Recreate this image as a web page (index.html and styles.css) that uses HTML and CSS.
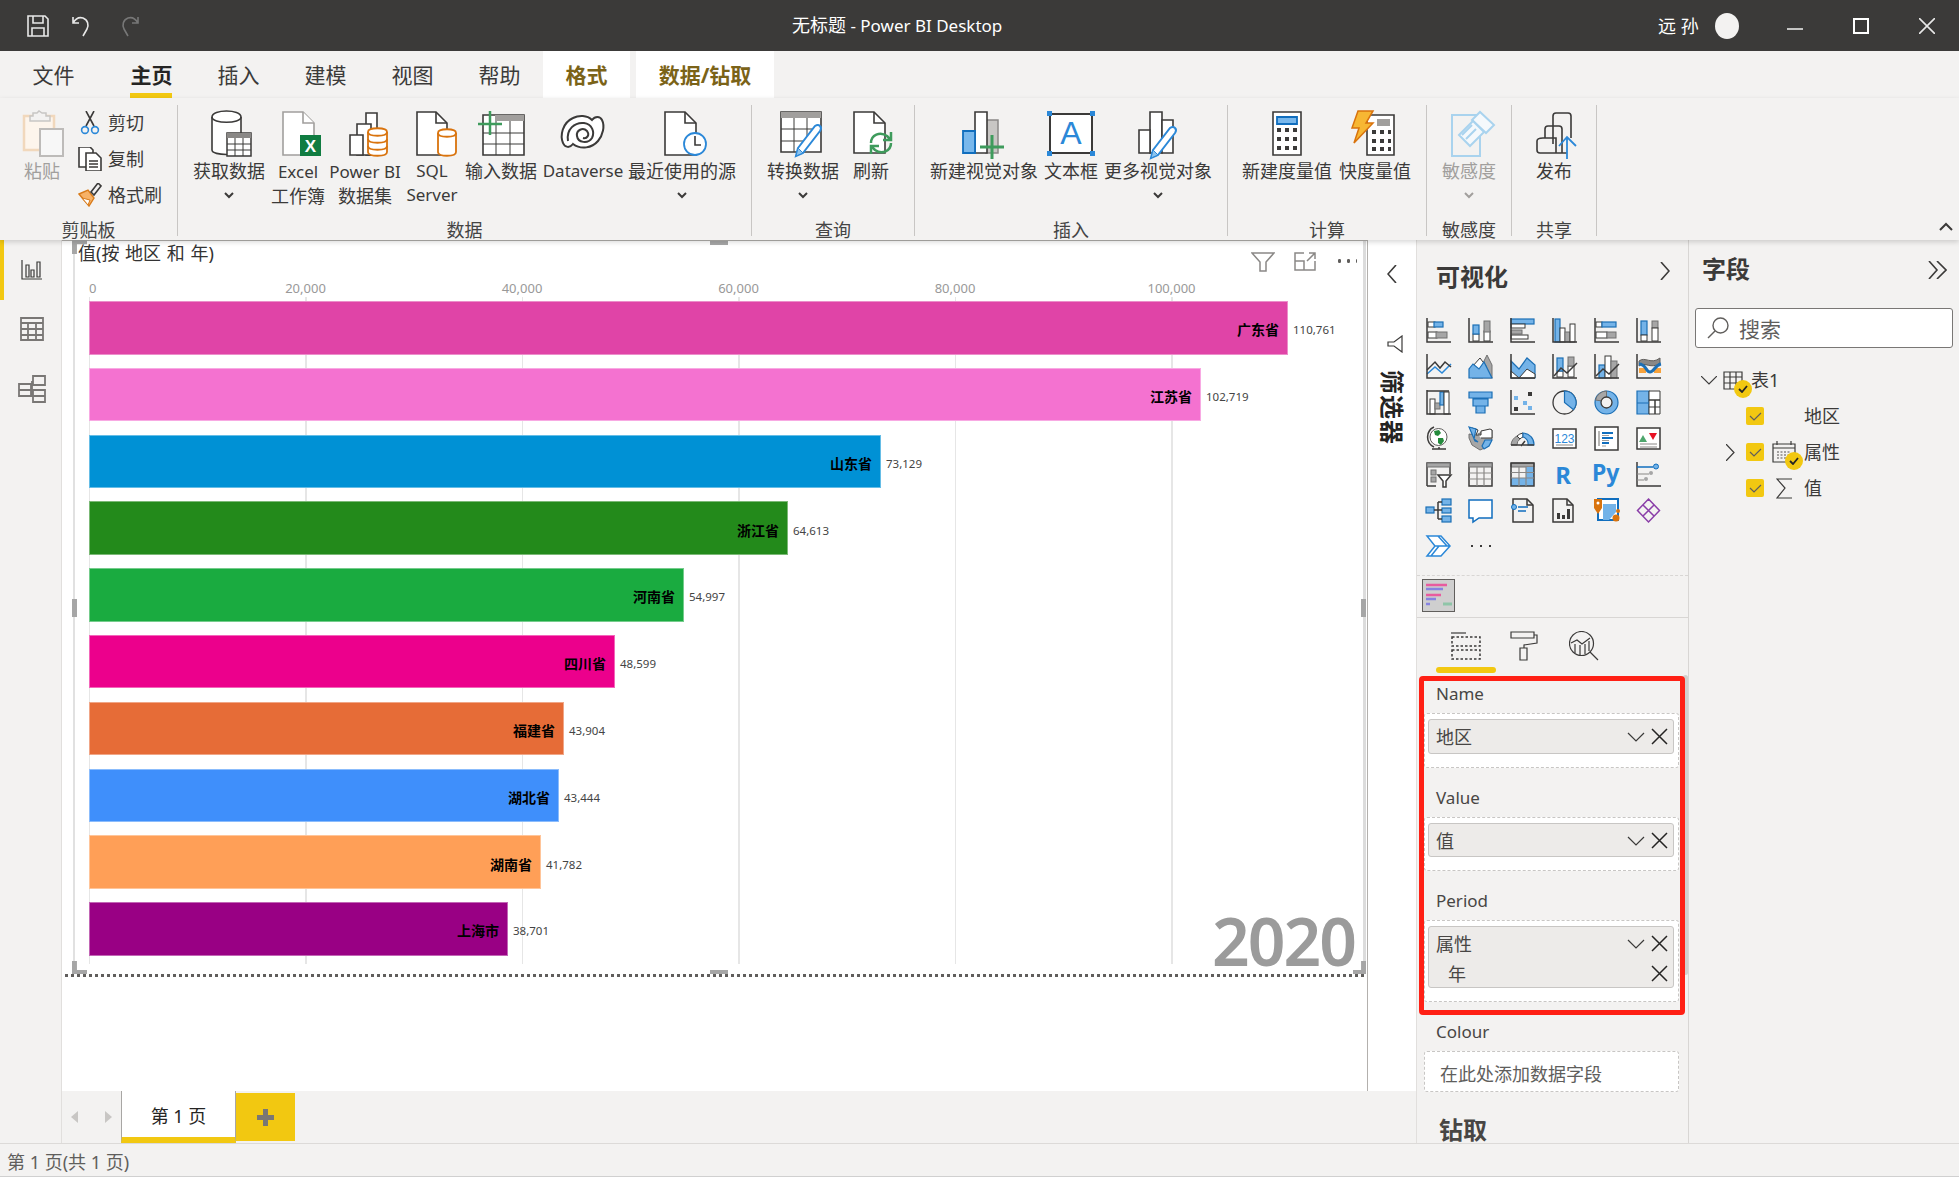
FILE: index.html
```html
<!DOCTYPE html>
<html lang="zh">
<head>
<meta charset="utf-8">
<title>无标题 - Power BI Desktop</title>
<link rel="stylesheet" href="styles.css">
</head>
<body>
<div class="app">
  <header class="titlebar">
    <div class="qat">
      <svg class="qi" viewBox="0 0 22 22"><path class="w" d="M1 1h17l3 3v17H1zM6 1v7h10V1M5 21v-8h12v8"/></svg>
      <svg class="qi" viewBox="0 0 22 22"><path class="w" d="M1 2v6h6M1 8c3-5 7-6 10-5 5 2 6 7 4 11l-4 7"/></svg>
      <svg class="qi" viewBox="0 0 22 22"><path class="dim" d="M21 2v6h-6M21 8c-3-5-7-6-10-5-5 2-6 7-4 11l4 7"/></svg>
    </div>
    <div class="doc-title"><span class="zh">无标题</span> - Power BI Desktop</div>
    <div class="win">
      <span class="user">远 孙</span>
      <span class="avatar"></span>
      <svg class="wb min" viewBox="0 0 16 16"><path class="w" d="M0 10h16"/></svg>
      <svg class="wb max" viewBox="0 0 16 16"><path class="w2" d="M1 1h14v14H1z"/></svg>
      <svg class="wb cls" viewBox="0 0 16 16"><path class="w" d="M0 0l16 16M16 0L0 16"/></svg>
    </div>
  </header>

  <nav class="tabs">
    <span class="tab t-file">文件</span>
    <span class="tab active">主页</span>
    <span class="tab">插入</span>
    <span class="tab">建模</span>
    <span class="tab">视图</span>
    <span class="tab">帮助</span>
    <span class="ctx ctx-a">格式</span>
    <span class="ctx ctx-b">数据/钻取</span>
  </nav>

  <section class="ribbon">
    <div class="grp g-clip">
      <div class="items">
        <div class="item disabled">
          <svg class="ico" viewBox="-1 0 48 45"><path class="pf" d="M5 5h30v34H5z"/><path class="pc" d="M14 5V2h4l2-2 3 2h4v3h4v5H11V5z"/><path class="pp" d="M21 18h23v27H21z"/></svg>
          <span class="lb">粘贴</span>
        </div>
        <div class="small-col">
          <div class="small"><svg class="sico" viewBox="0 0 24 24"><path class="k" d="M8 0l8 15M16 0L8 15"/><circle class="bl" cx="7" cy="19" r="3.4"/><circle class="bl" cx="17" cy="19" r="3.4"/></svg><span>剪切</span></div>
          <div class="small"><svg class="sico" viewBox="0 0 24 24"><path class="kw" d="M1 0h11l3 3v17H1z"/><path class="kw" d="M8 6h10l5 5v13H8z"/><path class="k" d="M11 14h9M11 17h9M11 20h9"/></svg><span>复制</span></div>
          <div class="small"><svg class="sico" viewBox="0 0 24 24"><path class="o" d="M1 11l9-4 6 8-5 8z"/><path class="o2" d="M4 15l6 7 2-5z"/><path class="k" d="M13 9l7-9 3 3-7 9z"/></svg><span>格式刷</span></div>
        </div>
      </div>
      <div class="gl">剪贴板</div>
    </div>

    <div class="grp g-data">
      <div class="items">
        <div class="item"><svg class="ico" viewBox="-3 0 48 45"><path class="kw" d="M4 6c0-8 29-8 29 0v33c0 6-29 6-29 0z"/><path class="k" d="M4 6c0 7 29 7 29 0"/><use href="#calc" x="18" y="21"/></svg><span class="lb">获取数据</span><svg class="chev" viewBox="0 0 10 7"><path class="k2" d="M1 1l4 4 4-4"/></svg></div>
        <div class="item"><svg class="ico" viewBox="-4 0 48 45"><path class="dg" d="M5 1h20l11 11v32H5z"/><path class="dg" d="M25 1v11h11"/><rect class="xl" x="22" y="24" width="21" height="21"/><text class="xt" x="32.5" y="41">X</text></svg><span class="lb"><span class="en">Excel</span><br>工作簿</span></div>
        <div class="item"><svg class="ico" viewBox="-5 0 48 45"><path class="kw" d="M20 2h11v42H20z"/><path class="kw" d="M11 13h14v31H11z"/><path class="kw" d="M4 24h13v20H4z"/><g class="od"><path d="M22 21c0-5 19-5 19 0v20c0 5-19 5-19 0z"/><path d="M22 21c0 5 19 5 19 0M22 28c0 5 19 5 19 0M22 35c0 5 19 5 19 0"/></g></svg><span class="lb"><span class="en">Power BI</span><br>数据集</span></div>
        <div class="item"><svg class="ico" viewBox="-4 0 48 45"><path class="kw" d="M5 1h19l11 11v32H5z"/><path class="k" d="M24 1v11h11"/><g class="od"><path d="M26 22c0-5 18-5 18 0v19c0 5-18 5-18 0z"/><path d="M26 22c0 5 18 5 18 0"/></g></svg><span class="lb en">SQL<br>Server</span></div>
        <div class="item"><svg class="ico" viewBox="-1 0 48 45"><path class="kw" d="M5 4h41v40H5z"/><path class="ghd" d="M17 4h29v6H17z"/><path class="k1" d="M5 22h41M5 33h41M18 10v34M32 10v34"/><path class="gr" d="M0 13h24M12 0v24"/></svg><span class="lb">输入数据</span></div>
        <div class="item"><svg class="ico" viewBox="0 0 48 45"><path class="kw2" d="M14 7C20 4 28 4 33 9 36 5 41 5 43 9 46 15 44 24 39 30 33 37 22 39 14 33 11 37 6 37 4 32 1 25 3 12 14 7z"/><path class="k3" d="M9 30C7 18 16 11 25 12 33 13 36 21 33 27 29 33 19 32 18 25 17 19 24 16 28 20 31 24 28 28 24 27"/></svg><span class="lb en">Dataverse</span></div>
        <div class="item"><svg class="ico" viewBox="-2 0 48 45"><path class="kw" d="M5 1h20l11 11v32H5z"/><path class="k" d="M25 1v11h11"/><circle class="clk" cx="35" cy="33" r="11"/><path class="k" d="M35 25v9h6"/></svg><span class="lb">最近使用的源</span><svg class="chev" viewBox="0 0 10 7"><path class="k2" d="M1 1l4 4 4-4"/></svg></div>
      </div>
      <div class="gl">数据</div>
    </div>

    <div class="grp g-query">
      <div class="items">
        <div class="item"><svg class="ico" viewBox="0 0 48 45"><path class="kw" d="M2 1h40v40H2z"/><path class="ghd" d="M2 1h40v6H2z"/><path class="k1" d="M2 18h40M2 30h30M15 7v34M28 7v20"/><use href="#pencil" x="16" y="13"/></svg><span class="lb">转换数据</span><svg class="chev" viewBox="0 0 10 7"><path class="k2" d="M1 1l4 4 4-4"/></svg></div>
        <div class="item"><svg class="ico" viewBox="-3 0 48 45"><path class="kw" d="M4 1h20l11 11v30H4z"/><path class="k" d="M24 1v11h11"/><path class="gr2" d="M21 32c0-8 9-12 16-7l3 3M41 32c0 8-9 12-16 7l-3-3"/><path class="gr2" d="M41 21v8h-8M21 43v-8h8"/></svg><span class="lb">刷新</span></div>
      </div>
      <div class="gl">查询</div>
    </div>

    <div class="grp g-insert">
      <div class="items">
        <div class="item"><svg class="ico" viewBox="0 0 48 45"><path class="gb" d="M26 9h12v33H26z"/><path class="kw" d="M15 1h12v41H15z"/><path class="bb" d="M3 20h12v22H3z"/><path class="gr3" d="M20 36h24M32 24v24"/></svg><span class="lb">新建视觉对象</span></div>
        <div class="item"><svg class="ico" viewBox="0 0 48 45"><path class="kw2" d="M3 3h42v39H3z"/><g class="hd"><rect x="0" y="0" width="5" height="5"/><rect x="43" y="0" width="5" height="5"/><rect x="0" y="40" width="5" height="5"/><rect x="43" y="40" width="5" height="5"/></g><text class="at" x="24" y="33">A</text></svg><span class="lb">文本框</span></div>
        <div class="item"><svg class="ico" viewBox="-2 0 48 45"><path class="kw" d="M14 1h12v41H14z"/><path class="kw" d="M3 19h11v23H3zM26 9h11v33H26z"/><use href="#pencil" x="14" y="15"/></svg><span class="lb">更多视觉对象</span><svg class="chev" viewBox="0 0 10 7"><path class="k2" d="M1 1l4 4 4-4"/></svg></div>
      </div>
      <div class="gl">插入</div>
    </div>

    <div class="grp g-calc">
      <div class="items">
        <div class="item"><svg class="ico" viewBox="0 0 48 45"><path class="kw" d="M10 1h28v43H10z"/><path class="bb" d="M14 6h20v7H14z"/><g class="kd"><path d="M14 17h4v4h-4zM22 17h4v4h-4zM30 17h4v4h-4zM14 26h4v4h-4zM22 26h4v4h-4zM30 26h4v4h-4zM14 35h4v4h-4zM22 35h4v4h-4zM30 35h4v4h-4z"/></g></svg><span class="lb">新建度量值</span></div>
        <div class="item"><svg class="ico" viewBox="1 0 48 45"><path class="kw" d="M17 4h27v40H17z"/><path class="ghd" d="M27 8h13v7H27z"/><g class="kd"><path d="M22 19h4v4h-4zM30 19h4v4h-4zM38 19h3v4h-3zM22 28h4v4h-4zM30 28h4v4h-4zM38 28h3v4h-3zM22 36h4v4h-4zM30 36h4v4h-4zM38 36h3v4h-3z"/></g><path class="bolt" d="M8 0h15l-7 12h7L4 32l5-15H2z"/></svg><span class="lb">快度量值</span></div>
      </div>
      <div class="gl">计算</div>
    </div>

    <div class="grp g-sens">
      <div class="items">
        <div class="item disabled"><svg class="ico" viewBox="-3 0 48 45"><path class="lbl" d="M4 4h28v41H4z"/><path class="lbl2" d="M24 9l8-8 14 13-8 8z"/><path class="lbl2" d="M11 24l14-14 11 11-14 14z"/><path class="lbl" d="M14 24l10-10M18 28l10-10"/></svg><span class="lb">敏感度</span><svg class="chev" viewBox="0 0 10 7"><path class="k2g" d="M1 1l4 4 4-4"/></svg></div>
      </div>
      <div class="gl">敏感度</div>
    </div>

    <div class="grp g-share">
      <div class="items">
        <div class="item"><svg class="ico" viewBox="-6 0 48 45"><path class="k" d="M17 33V5q0-3 3-3h12q3 0 3 3v22M9 27v-9q0-3 3-3h11q3 0 3 3v24M7 27h13v15H4q-3 0-3-3V30q0-3 6-3zM4 42h27"/><path class="up" d="M31 48V26M23 35l8-9 9 9"/></svg><span class="lb">发布</span></div>
      </div>
      <div class="gl">共享</div>
    </div>
    <svg class="collapse" viewBox="0 0 14 9"><path class="k2" d="M1 8l6-6 6 6"/></svg>
  </section>

  <main class="main">
    <aside class="leftnav">
      <span class="nav-ind"></span>
      <svg class="nico n1" viewBox="0 0 22 22"><path class="k1n" d="M1 1v19h20M5 6h3v12H5zM10 11h3v7h-3zM16 3h3v15h-3z"/></svg>
      <svg class="nico n2" viewBox="0 0 24 24"><path class="gn" d="M1 1h22v22H1zM1 6h22M1 12h22M1 18h22M8 6v17M16 6v17"/></svg>
      <svg class="nico n3" viewBox="0 0 28 28"><path class="gn" d="M15 1h12v9H15zM1 9h12v12H1zM1 15h12M15 15h12v12H15zM15 21h12M15 10h-1M14 6v16"/></svg>
    </aside>

    <div class="center">
      <div class="canvas-row">
        <div class="report">
          <div class="visual">
            <span class="vtitle">值(按 地区 和 年)</span>
            <div class="axis">
              <span>0</span><span>20,000</span><span>40,000</span><span>60,000</span><span>80,000</span><span>100,000</span>
            </div>
            <div class="plot">
              <div class="row"><div class="bar c1" style="width:1199px">广东省</div><span class="val">110,761</span></div>
              <div class="row"><div class="bar c2" style="width:1112px">江苏省</div><span class="val">102,719</span></div>
              <div class="row"><div class="bar c3" style="width:792px">山东省</div><span class="val">73,129</span></div>
              <div class="row"><div class="bar c4" style="width:699px">浙江省</div><span class="val">64,613</span></div>
              <div class="row"><div class="bar c5" style="width:595px">河南省</div><span class="val">54,997</span></div>
              <div class="row"><div class="bar c6" style="width:526px">四川省</div><span class="val">48,599</span></div>
              <div class="row"><div class="bar c7" style="width:475px">福建省</div><span class="val">43,904</span></div>
              <div class="row"><div class="bar c8" style="width:470px">湖北省</div><span class="val">43,444</span></div>
              <div class="row"><div class="bar c9" style="width:452px">湖南省</div><span class="val">41,782</span></div>
              <div class="row"><div class="bar c10" style="width:419px">上海市</div><span class="val">38,701</span></div>
            </div>
            <span class="year">2020</span>
            <div class="vhead">
              <svg class="vh-f" viewBox="0 0 24 20"><path class="gv" d="M1 1h22l-8 9v9H9v-9z"/></svg>
              <svg class="vh-e" viewBox="0 0 22 19"><path class="gv" d="M10 1H1v17h20V9M1 9h9v9M13 9l8-8M15 1h6v6"/></svg>
              <span class="vh-d"></span>
            </div>
            <span class="hnd h-tl"></span><span class="hnd h-bl"></span><span class="hnd h-br"></span>
            <span class="hnd h-t"></span><span class="hnd h-b"></span><span class="hnd h-l"></span><span class="hnd h-r"></span>
          </div>
          <div class="dots"></div>
        </div>
        <aside class="filters">
          <svg class="f-chev" viewBox="0 0 10 18"><path class="k" d="M9 0L1 9l8 9"/></svg>
          <svg class="f-ico" viewBox="0 0 16 18"><path class="k1n" d="M15 1v16L7 11H1V7h6z"/></svg>
          <span class="f-text">筛选器</span>
        </aside>
      </div>
      <div class="pagetabs">
        <div class="pg-nav"><span class="tri-l"></span><span class="tri-r"></span></div>
        <div class="pg-tab">第 1 页</div>
        <div class="pg-add"><span></span></div>
      </div>
    </div>

    <aside class="viz">
      <div class="pane-head"><span class="pane-title">可视化</span><svg class="pane-chev" viewBox="0 0 10 18"><path class="k" d="M1 0l8 9-8 9"/></svg></div>
      <div class="viz-grid">
        <svg viewBox="0 0 25 25"><rect class="wf" x="2" y="4" width="7" height="5"/><rect class="bf" x="8" y="4" width="9" height="5"/><rect class="wf" x="2" y="14" width="9" height="6"/><rect class="gf" x="10" y="14" width="11" height="6"/><path class="s" d="M1 0v24h24"/></svg>
        <svg viewBox="0 0 25 25"><rect class="wf" x="5" y="16" width="6" height="7"/><rect class="bf" x="5" y="7" width="6" height="9"/><rect class="wf" x="16" y="13" width="6" height="10"/><rect class="gf" x="16" y="3" width="6" height="11"/><path class="s" d="M1 0v24h24"/></svg>
        <svg viewBox="0 0 25 25"><rect class="bf" x="1" y="1" width="23" height="5"/><rect class="wf" x="1" y="6" width="14" height="4"/><rect class="gf" x="1" y="12" width="11" height="4"/><rect class="wf" x="1" y="17" width="17" height="4"/><path class="s" d="M1 0v24h24"/></svg>
        <svg viewBox="0 0 25 25"><rect class="bf" x="3" y="1" width="5" height="23"/><rect class="wf" x="8" y="10" width="5" height="14"/><rect class="gf" x="13" y="14" width="5" height="10"/><rect class="wf" x="18" y="6" width="5" height="18"/><path class="s" d="M1 0v24h24"/></svg>
        <svg viewBox="0 0 25 25"><rect class="wf" x="2" y="4" width="6" height="5"/><rect class="bf" x="8" y="4" width="14" height="5"/><rect class="wf" x="2" y="14" width="11" height="6"/><rect class="gf" x="13" y="14" width="9" height="6"/><path class="s" d="M1 0v24h24"/></svg>
        <svg viewBox="0 0 25 25"><rect class="bf" x="5" y="3" width="6" height="14"/><rect class="wf" x="5" y="17" width="6" height="6"/><rect class="gf" x="16" y="3" width="6" height="7"/><rect class="wf" x="16" y="10" width="6" height="13"/><path class="s" d="M1 0v24h24"/></svg>

        <svg viewBox="0 0 25 25"><path class="l2" d="M1 20l8-7 7 6 9-9"/><path class="s" d="M1 16l8-8 5 6 5-6 6 5"/><path class="s" d="M1 0v24h24"/></svg>
        <svg viewBox="0 0 25 25"><path class="gf" d="M15 9l4-8 5 10v13h-9z"/><path class="wf" d="M4 13l8-9 6 8-3 12H4z"/><path class="bf" d="M1 24V15l4-5 6 5 5-7 8 16z"/></svg>
        <svg viewBox="0 0 25 25"><path class="bf" d="M1 7l8 8 8-11 8 7v13H1z"/><path class="wf" d="M1 17l8 7h-8zM9 24l8-9 8 5v4z"/><path class="s" d="M1 0v24h24"/></svg>
        <svg viewBox="0 0 25 25"><rect class="wf" x="5" y="17" width="6" height="6"/><rect class="bf" x="5" y="4" width="6" height="13"/><rect class="wf" x="16" y="12" width="6" height="11"/><rect class="gf" x="16" y="3" width="6" height="9"/><path class="s" d="M2 22l7-8 6 5 10-10"/><path class="s" d="M1 0v24h24"/></svg>
        <svg viewBox="0 0 25 25"><rect class="bf" x="5" y="11" width="6" height="13"/><rect class="wf" x="11" y="2" width="6" height="22"/><rect class="gf" x="17" y="7" width="6" height="17"/><path class="s" d="M2 22l7-7 6 5 10-10"/><path class="s" d="M1 0v24h24"/></svg>
        <svg viewBox="0 0 25 25"><path class="rb-g" d="M3 7c6-5 12 4 21-3v5c-9 7-15-2-21 3z"/><path class="rb-o" d="M3 14h7v5H3zM18 14h7v5h-7z"/><path class="rb-b" d="M3 10c7 0 7 8 11 8s5-7 11-8"/><path class="s" d="M1 0v24h24"/></svg>

        <svg viewBox="0 0 25 25"><rect class="wf" x="4" y="9" width="5" height="15"/><rect class="gf" x="9" y="13" width="5" height="6"/><rect class="bf" x="14" y="2" width="4" height="13"/><rect class="wf" x="18" y="2" width="5" height="22"/><path class="s" d="M1 1h22M1 0v24h24"/></svg>
        <svg viewBox="0 0 25 25"><path class="bf" d="M1 2h23v6H1zM5 9h15v7H5zM8 16h9v7H8z"/></svg>
        <svg viewBox="0 0 25 25"><rect class="lb1" x="4" y="6" width="4" height="4"/><rect class="lb1" x="13" y="11" width="4" height="4"/><rect class="lb1" x="18" y="16" width="4" height="4"/><rect class="db1" x="18" y="2" width="4" height="4"/><rect class="db1" x="4" y="17" width="4" height="4"/><path class="s" d="M1 0v24h24"/></svg>
        <svg viewBox="0 0 25 25"><circle class="wp" cx="12.5" cy="12.5" r="11.5"/><path class="bf" d="M12.5 1a11.5 11.5 0 0 1 9 18.700L12.500 12.500z"/></svg>
        <svg viewBox="0 0 25 25"><circle class="bf" cx="12.500" cy="12.500" r="11.500"/><path class="gf" d="M12.500 1a11.500 11.500 0 0 0-11 9l6.500 1a5 5 0 0 1 4.500-4z"/><circle class="wp" cx="12.500" cy="12.500" r="5.500"/></svg>
        <svg viewBox="0 0 25 25"><path class="bf" d="M1 1h12v23H1z"/><path class="wf" d="M13 1h11v9H13zM13 10h6v14h-6zM19 10h5v14h-5zM13 17h11"/><path class="s1b" d="M1 13h12"/></svg>

        <svg viewBox="0 0 25 25"><circle class="globe" cx="12.500" cy="11" r="8.500"/><path class="land" d="M8 5l5-1 2 3-3 3-3-1zM12 12l5 0 1 3-3 4-3-2z"/><path class="s" d="M8 1a11 11 0 0 0 0 20M6 23h14M13 21v2"/></svg>
        <svg viewBox="0 0 25 25"><path class="gf" d="M1 8l7 1 6-3 10-2v9l-5 8-7 3-8-5-3-7z"/><path class="wf" d="M4 2l6 2-2 5h5v-4l9-2 2 1v8L13 12"/><path class="bf" d="M1 1l7 2-2 10 4 3-3-1zM14 20l3-6h7l-3 6-5 3z"/></svg>
        <svg viewBox="0 0 25 25"><path class="gf" d="M1 19a11.500 11.500 0 0 1 6-9l3 3a7 7 0 0 0-3 6z"/><path class="wf" d="M7 10a11.500 11.500 0 0 1 6-3v4a7 7 0 0 0-3 2z"/><path class="bf" d="M13 7a11.500 11.500 0 0 1 11 12h-6a7 7 0 0 0-5-8z"/><path class="s" d="M1 19h23M11 20l4-5"/></svg>
        <svg viewBox="0 0 25 25"><rect class="wf2" x="1" y="3" width="23" height="19"/><text class="t123" x="12.500" y="17">123</text><path class="l1" d="M4 19h17"/></svg>
        <svg viewBox="0 0 25 25"><rect class="wf2" x="1" y="1" width="23" height="23"/><path class="gb2" d="M5 5v15"/><path class="l3" d="M8 7h11M8 12h11M8 17h7"/><path class="l4" d="M8 9.500h7M8 14.500h7M8 20h4"/></svg>
        <svg viewBox="0 0 25 25"><rect class="wf2" x="1" y="2" width="23" height="21"/><path class="tg" d="M3 16l4-7 4 7z"/><path class="tr" d="M13 7h8l-4 7z"/><path class="l5" d="M4 18h17M4 21h17"/></svg>

        <svg viewBox="0 0 25 25"><path class="s" d="M1 24V1h23v11M1 24h9"/><path class="gf" d="M1 1h23v4H1z"/><rect class="gf" x="5" y="8" width="5" height="5"/><rect class="gf" x="5" y="15" width="5" height="5"/><path class="wf2" d="M12 13h13l-5 6v6h-3v-6z"/></svg>
        <svg viewBox="0 0 25 25"><path class="s" d="M1 1h23v23H1z"/><path class="gf" d="M1 1h23v4H1z"/><path class="l6" d="M1 11h23M1 17h23M9 5v19M16 5v19"/></svg>
        <svg viewBox="0 0 25 25"><path class="gf" d="M1 1h23v4H1z"/><path class="bf0" d="M16 5h8v19h-8zM1 16h15v8H1z"/><path class="s" d="M1 1h23v23H1z"/><path class="l6" d="M1 10.500h23M1 16h23M9 5v19M16 5v19"/></svg>
        <svg viewBox="0 0 25 25"><text class="tr1" x="11" y="22">R</text></svg>
        <svg viewBox="0 0 25 25"><text class="tpy" x="-2" y="19">Py</text></svg>
        <svg viewBox="0 0 25 25"><path class="s" d="M1 0v24h24"/><path class="l7" d="M1 5h16"/><circle class="cb" cx="20" cy="4.500" r="2.500"/><path class="l8" d="M1 12h12M1 18h7"/><circle class="cg" cx="15" cy="11" r="2"/><circle class="cg" cx="10" cy="17" r="2"/></svg>

        <svg viewBox="0 0 25 25"><rect class="bf" x="0" y="9" width="8" height="6"/><rect class="bf" x="16" y="1" width="9" height="6"/><rect class="bf" x="16" y="10" width="9" height="5"/><rect class="bf" x="16" y="18" width="9" height="6"/><path class="s" d="M8 12h8M12 4v17M12 4h4M12 21h4"/></svg>
        <svg viewBox="0 0 25 25"><path class="bub" d="M1 2h23v18H11l-6 4v-4H1z"/></svg>
        <svg viewBox="0 0 25 25"><path class="s" d="M3 1h14l6 6v17H3z"/><path class="s" d="M17 1v6h6"/><circle class="cb2" cx="4" cy="9" r="2.500"/><path class="l7" d="M8 9h10M8 13h8"/></svg>
        <svg viewBox="0 0 25 25"><path class="s" d="M1 1h14l6 6v17H1z"/><path class="s" d="M15 1v6h6"/><path class="kf" d="M5 15h3v6H5zM10 17h3v4h-3zM15 11h3v10h-3z"/></svg>
        <svg viewBox="0 0 25 25"><path class="mb" d="M4 1h20v21H4z"/><path class="bf0" d="M9 6h13v8l-7 8H9z"/><path class="pin" d="M0 1h8v9l-4 6-4-6z"/><circle class="pn" cx="4" cy="5" r="1.500"/><circle class="pin" cx="22" cy="20" r="3.500"/><circle class="pin" cx="24" cy="13" r="2"/></svg>
        <svg viewBox="0 0 25 25"><path class="dm" d="M12.500 1l11 11.500-11 11.500-11-11.500zM7 7l11 11M18 7L7 18"/></svg>

        <svg viewBox="0 0 25 25"><path class="ch" d="M1 2h14l9 10-9 10H1l8-10zM12 2l9 10M9 12h15M5 22l8-10"/></svg>
        <svg viewBox="0 0 25 25"><path class="dd" d="M3 11h2v2H3zM12 11h2v2h-2zM21 11h2v2h-2z"/></svg>
      </div>
      <div class="thumb-row">
        <svg class="thumb" viewBox="0 0 33 33"><rect class="th-bg" x=".5" y=".5" width="32" height="32"/><path class="th-p" d="M4 6h21M4 16h15"/><path class="th-b" d="M4 10h17M4 20h10M4 25h4"/><path class="th-g" d="M21 25h9"/></svg>
      </div>
      <div class="viz-tabs">
        <button class="vt on"><svg viewBox="0 0 30 28"><path class="k1n" d="M0 1h15"/><path class="dash" d="M1 5h28v9H1zM1 18h28v9H1z"/></svg></button>
        <button class="vt"><svg viewBox="0 0 28 30"><path class="k1n" d="M1 1h23v6H1zM24 4h3v8l-13 2v3M10 17h7v12h-7z"/></svg></button>
        <button class="vt"><svg viewBox="0 0 30 30"><circle class="k1n" cx="12.500" cy="12.500" r="12"/><path class="k1n" d="M21 21l8 8M2 12l6-3 5 4 8-6M6 13v9M11 14v10M16 13v10M20 10v10"/></svg></button>
      </div>
      <div class="wells">
        <div class="flabel">Name</div>
        <div class="well"><div class="pill"><div class="pr"><span>地区</span><svg class="pc1" viewBox="0 0 18 10"><path class="k1n" d="M1 1l8 8 8-8"/></svg><svg class="px" viewBox="0 0 17 17"><path class="kx" d="M1 1l15 15M16 1L1 16"/></svg></div></div></div>
        <div class="flabel">Value</div>
        <div class="well"><div class="pill thin"><div class="pr"><span>值</span><svg class="pc1" viewBox="0 0 18 10"><path class="k1n" d="M1 1l8 8 8-8"/></svg><svg class="px" viewBox="0 0 17 17"><path class="kx" d="M1 1l15 15M16 1L1 16"/></svg></div></div></div>
        <div class="flabel">Period</div>
        <div class="well"><div class="pill tall"><div class="pr"><span>属性</span><svg class="pc1" viewBox="0 0 18 10"><path class="k1n" d="M1 1l8 8 8-8"/></svg><svg class="px" viewBox="0 0 17 17"><path class="kx" d="M1 1l15 15M16 1L1 16"/></svg></div><div class="pr sub"><span>年</span><svg class="px" viewBox="0 0 17 17"><path class="kx" d="M1 1l15 15M16 1L1 16"/></svg></div></div></div>
        <div class="flabel">Colour</div>
        <div class="well empty">在此处添加数据字段</div>
        <div class="drill">钻取</div>
      </div>
      <span class="scroll"></span>
      <span class="redbox"></span>
    </aside>

    <aside class="fields">
      <div class="fhead"><span class="pane-title">字段</span><svg class="dbl" viewBox="0 0 19 18"><path class="k" d="M1 0l8 9-8 9M9 0l9 9-9 9"/></svg></div>
      <div class="search"><svg viewBox="0 0 22 22"><circle class="gs" cx="13.500" cy="8.500" r="7.500"/><path class="gs" d="M8 14l-7 7"/></svg><span>搜索</span></div>
      <div class="tree">
        <div class="tr root">
          <svg class="t-chev" viewBox="0 0 16 9"><path class="k1n" d="M0 0l8 8 8-8"/></svg>
          <span class="t-ic"><svg viewBox="0 0 20 19"><path class="k1n" d="M1 1h18v17H1zM1 6h18M1 12h18M7 1v17M13 1v17"/></svg><i class="badge b1"><svg viewBox="0 0 10 8"><path class="bc" d="M1 4l3 3 5-6"/></svg></i></span>
          <span class="t-tx">表1</span>
        </div>
        <div class="tr"><span class="t-exp"></span><span class="cb-y"><svg viewBox="0 0 18 18"><path class="yc" d="M4 9l4 4 7-7"/></svg></span><span class="t-slot"></span><span>地区</span></div>
        <div class="tr"><span class="t-exp"><svg viewBox="0 0 9 17"><path class="k1n" d="M0 0l8 8.500L0 17"/></svg></span><span class="cb-y"><svg viewBox="0 0 18 18"><path class="yc" d="M4 9l4 4 7-7"/></svg></span><span class="t-slot"><svg class="cal" viewBox="0 0 24 22"><path class="k1n" d="M1 3h22v18H1zM1 7h22M5 0v4M19 0v4"/><path class="cald" d="M5 11h14M5 14h14M5 17h14"/></svg><i class="badge b2"><svg viewBox="0 0 10 8"><path class="bc" d="M1 4l3 3 5-6"/></svg></i></span><span>属性</span></div>
        <div class="tr"><span class="t-exp"></span><span class="cb-y"><svg viewBox="0 0 18 18"><path class="yc" d="M4 9l4 4 7-7"/></svg></span><span class="t-slot"><svg class="sig" viewBox="0 0 16 21"><path class="k1n" d="M16 1H1l8 9-8 10h15"/></svg></span><span>值</span></div>
      </div>
    </aside>
  </main>

  <footer class="status">第 1 页(共 1 页)</footer>
</div>

<svg class="defs" width="0" height="0">
  <defs>
    <g id="calc"><path fill="#fff" stroke="#3b3a39" stroke-width="1.500" d="M1 1h24v23H1z"/><path fill="#8a8886" d="M1 1h24v5H1z"/><path fill="none" stroke="#3b3a39" d="M1 12h24M1 18h24M9 6v18M17 6v18"/></g>
    <g id="pencil"><path fill="#fff" stroke="#2b88d8" stroke-width="2" d="M3 24L20 2q3-2 5 0t0 5L8 29l-7 3z"/><path fill="#8dc4ee" stroke="#2b88d8" d="M3 24l5 5-7 3z"/></g>
  </defs>
</svg>
</body>
</html>
```

FILE: styles.css
```css
* { box-sizing: border-box; }
html, body { margin: 0; padding: 0; background: #fff; }
body { font-family: "Noto Sans", "Noto Sans CJK SC", sans-serif; color: #333; overflow: hidden; }
.app { width: 1959px; height: 1179px; display: flex; flex-direction: column; overflow: hidden; }
.defs { position: absolute; }
svg { display: block; }

/* title bar */
.titlebar { height: 51px; flex: none; background: #3b3a39; display: flex; align-items: center; color: #fff; }
.qat { width: 792px; display: flex; gap: 23px; padding-left: 27px; }
.qi { width: 22px; height: 22px; }
.w { fill: none; stroke: #e8e8e8; stroke-width: 1.600; }
.w2 { fill: none; stroke: #fff; stroke-width: 2; }
.dim { fill: none; stroke: #777; stroke-width: 1.600; }
.doc-title { font-size: 17px; line-height: 24px; }
.zh { font-size: 18px; }
.win { margin-left: auto; display: flex; align-items: center; }
.user { font-size: 18px; line-height: 24px; width: 56px; }
.avatar { width: 24px; height: 26px; border-radius: 50%; background: #f3f2f1; margin-left: 1px; }
.wb { width: 16px; height: 16px; }
.min { margin-left: 48px; margin-top: 2px; }
.max { margin-left: 50px; }
.cls { margin-left: 50px; margin-right: 24px; }

/* tabs */
.tabs { height: 47px; flex: none; background: #f3f2f1; display: flex; }
.tab { width: 87px; text-align: center; font-size: 21px; line-height: 48px; color: #3b3a39; }
.t-file { margin: 0 11px 0 10px; }
.tab.active { font-weight: 700; color: #252423; position: relative; }
.tab.active::after { content: ""; position: absolute; left: 22px; width: 42px; bottom: 0; height: 5px; background: #f2c811; }
.ctx { background: #fff; color: #7b6318; font-weight: 700; font-size: 21px; line-height: 48px; text-align: center; }
.ctx-a { width: 87px; }
.ctx-b { width: 138px; margin-left: 6px; }

/* ribbon */
.ribbon { height: 142px; flex: none; background: #f3f2f1; display: flex; align-items: flex-start; padding-top: 7px; position: relative; z-index: 3; box-shadow: 0 2px 5px rgba(0,0,0,.16); }
.grp { height: 131px; border-right: 1px solid #c8c6c4; display: flex; flex-direction: column; flex: none; }
.items { height: 113px; display: grid; flex: none; }
.gl { font-size: 18px; line-height: 24px; text-align: center; color: #444; white-space: nowrap; }
.item { display: flex; flex-direction: column; align-items: center; padding-top: 6px; font-size: 18px; color: #3b3a39; min-width: 0; }
.ico { width: 48px; height: 45px; flex: none; overflow: visible; }
.lb { margin-top: 3px; line-height: 24px; text-align: center; white-space: nowrap; }
.en { font-size: 17px; }
.chev { width: 10px; height: 7px; margin-top: 9px; }
.disabled { color: #a19f9d; }
.g-clip { width: 178px; }
.g-clip .items { grid-template-columns: 50px auto; padding-left: 17px; column-gap: 11px; }
.small-col { display: flex; flex-direction: column; }
.small { height: 36px; display: flex; align-items: center; gap: 6px; font-size: 18px; color: #3b3a39; line-height: 24px; }
.sico { width: 24px; height: 24px; }
.g-data { width: 574px; }
.g-data .items { grid-template-columns: 76px 62px 72px 62px 76px 88px 110px; padding-left: 13px; }
.g-query { width: 163px; }
.g-query .items { grid-template-columns: 80px 56px; padding-left: 11px; }
.g-insert { width: 313px; }
.g-insert .items { grid-template-columns: 110px 64px 110px; padding-left: 14px; }
.g-calc { width: 199px; }
.g-calc .items { grid-template-columns: 92px 84px; padding-left: 13px; }
.g-sens { width: 85px; }
.g-sens .items { grid-template-columns: 1fr; }
.g-share { width: 85px; }
.g-share .items { grid-template-columns: 1fr; }
.collapse { width: 14px; height: 9px; position: absolute; right: 6px; top: 124px; }

.k { fill: none; stroke: #3b3a39; stroke-width: 1.600; }
.k1 { fill: none; stroke: #3b3a39; stroke-width: 1; }
.k1n { fill: none; stroke: #3b3a39; stroke-width: 1.200; }
.k2 { fill: none; stroke: #3b3a39; stroke-width: 2; }
.k2g { fill: none; stroke: #a19f9d; stroke-width: 2; }
.k3 { fill: none; stroke: #3b3a39; stroke-width: 2; }
.kw { fill: #fff; stroke: #3b3a39; stroke-width: 1.600; }
.kw2 { fill: #fff; stroke: #3b3a39; stroke-width: 2; }
.kd { fill: #3b3a39; }
.bl { fill: none; stroke: #2b88d8; stroke-width: 1.600; }
.o { fill: #f7b267; stroke: #d87b1a; stroke-width: 1.400; }
.o2 { fill: #fff; stroke: #d87b1a; }
.pf { fill: #fdf5ec; stroke: #f1d8bc; stroke-width: 2.500; }
.pc { fill: #f3f2f1; stroke: #c8c6c4; stroke-width: 1.500; }
.pp { fill: #f7f7f7; stroke: #bdbbb9; stroke-width: 2; }
.dg { fill: #fff; stroke: #a19f9d; stroke-width: 1.600; }
.xl { fill: #107c41; }
.xt { fill: #fff; font: 700 17px "Liberation Sans", sans-serif; text-anchor: middle; }
.od { fill: #fff; stroke: #d9730d; stroke-width: 1.800; }
.ghd { fill: #a19f9d; stroke: none; }
.gr { fill: none; stroke: #3e9b5c; stroke-width: 2.500; }
.gr2 { fill: none; stroke: #3e9b5c; stroke-width: 2.500; }
.gr3 { fill: none; stroke: #3e9b5c; stroke-width: 3; }
.clk { fill: #fff; stroke: #2b88d8; stroke-width: 1.800; }
.gb { fill: #c8c6c4; stroke: #8a8886; stroke-width: 1.500; }
.bb { fill: #79b8ec; stroke: #106ebe; stroke-width: 1.800; }
.hd { fill: #2b88d8; }
.at { fill: #2b88d8; font: 400 32px "Liberation Sans", sans-serif; text-anchor: middle; }
.bolt { fill: #f7b733; stroke: #d9730d; stroke-width: 1.500; }
.lbl { fill: none; stroke: #a9d3ee; stroke-width: 2; }
.lbl2 { fill: #f5f9fc; stroke: #a9d3ee; stroke-width: 2; }
.up { fill: none; stroke: #2b88d8; stroke-width: 1.800; }

/* main */
.main { height: 903px; flex: none; display: flex; }
.leftnav { width: 62px; flex: none; background: #f3f2f1; border-right: 1px solid #e1dfdd; position: relative; display: flex; flex-direction: column; align-items: center; padding-left: 3px; }
.nav-ind { position: absolute; left: 0; top: 0; width: 4px; height: 60px; background: #f2c811; }
.nico { flex: none; }
.n1 { width: 22px; height: 22px; margin-top: 19px; }
.n2 { width: 24px; height: 24px; margin-top: 36px; }
.n3 { width: 28px; height: 28px; margin-top: 34px; }
.gn { fill: none; stroke: #797775; stroke-width: 1.800; }

.center { width: 1354px; flex: none; display: flex; flex-direction: column; }
.canvas-row { height: 851px; flex: none; display: flex; background: #fff; }
.report { width: 1306px; flex: none; border-right: 1px solid #b3b0ad; border-top: 1px solid #b3b0ad; position: relative; }
.visual { margin-left: 11px; width: 1293px; height: 733px; border-left: 2px solid #e1e1e1; border-right: 3px solid #dcdcdc; position: relative; }
.vtitle { display: block; font-size: 18px; line-height: 24px; padding-left: 3px; color: #333; word-spacing: 1px; }
.axis { margin-top: 13px; padding-left: 14px; height: 19px; display: grid; grid-template-columns: repeat(6, 216.500px); font-size: 13px; line-height: 20px; color: #999; }
.axis span { justify-self: start; transform: translateX(-50%); }
.axis span:first-child { transform: none; }
.plot { margin-left: 14px; padding: 4px 0 8px; background: repeating-linear-gradient(90deg, #e6e6e6 0, #e6e6e6 1px, transparent 1px, transparent 216.500px); display: grid; grid-auto-rows: 53.500px; row-gap: 13.300px; }
.row { display: flex; align-items: stretch; }
.bar { font-size: 14px; font-weight: 700; color: #000; display: flex; justify-content: flex-end; align-items: center; padding: 5px 8px 0 0; border: 1px solid rgba(255,255,255,.4); line-height: 16px; }
.val { font-size: 11.500px; color: #444; margin-left: 5px; align-self: center; padding-top: 5px; line-height: 14px; }
.c1 { background: #e044a7; }
.c2 { background: #f472d0; }
.c3 { background: #0091d5; }
.c4 { background: #238a1b; }
.c5 { background: #1aab40; }
.c6 { background: #ec008c; }
.c7 { background: #e66c37; }
.c8 { background: #3f8ffb; }
.c9 { background: #ff9f57; }
.c10 { background: #990084; }
.year { position: absolute; right: 8px; bottom: -4px; font-size: 66px; font-weight: 600; line-height: 76px; color: #9b9b9b; letter-spacing: -2px; }
.vhead { position: absolute; top: 11px; right: 6px; display: flex; align-items: flex-start; gap: 19px; }
.vh-f { width: 24px; height: 20px; }
.vh-e { width: 22px; height: 19px; }
.vh-d { width: 22px; height: 4px; margin-top: 7px; background: radial-gradient(circle, #605e5c 0, #605e5c 1.700px, transparent 2px) 0 0 / 9px 4px; }
.gv { fill: none; stroke: #8a8886; stroke-width: 1.500; }
.hnd { position: absolute; background: #a6a6a6; }
.h-tl { left: -3px; top: -1px; width: 15px; height: 14px; clip-path: polygon(0 0, 100% 0, 100% 30%, 33% 30%, 33% 100%, 0 100%); }
.h-bl { left: -3px; bottom: 0; width: 15px; height: 13px; clip-path: polygon(0 0, 33% 0, 33% 70%, 100% 70%, 100% 100%, 0 100%); }
.h-br { right: -3px; bottom: 0; width: 13px; height: 13px; clip-path: polygon(62% 0, 100% 0, 100% 100%, 0 100%, 0 70%, 62% 70%); }
.h-t { left: 635px; top: 0; width: 18px; height: 4px; }
.h-b { left: 635px; bottom: 0; width: 18px; height: 4px; }
.h-l { left: -3px; top: 358px; width: 5px; height: 18px; }
.h-r { right: -3px; top: 358px; width: 5px; height: 18px; }
.dots { margin-left: 3px; width: 1302px; height: 3px; background: repeating-linear-gradient(90deg, #605e5c 0, #605e5c 3px, transparent 3px, transparent 6px); }

.filters { width: 48px; flex: none; background: #fff; display: flex; flex-direction: column; align-items: center; padding-top: 25px; }
.f-chev { width: 10px; height: 18px; }
.f-ico { width: 16px; height: 18px; margin-top: 52px; margin-left: 6px; }
.f-text { margin-top: 17px; writing-mode: vertical-rl; text-orientation: sideways; font-size: 24px; font-weight: 700; line-height: 26px; letter-spacing: 1px; color: #252423; }

.pagetabs { height: 52px; flex: none; background: #f3f2f1; display: flex; align-items: flex-start; }
.pg-nav { width: 59px; height: 52px; display: flex; align-items: center; gap: 27px; padding-left: 9px; }
.tri-l { width: 0; height: 0; border: 6px solid transparent; border-left: 0; border-right: 7px solid #c8c6c4; }
.tri-r { width: 0; height: 0; border: 6px solid transparent; border-right: 0; border-left: 7px solid #c8c6c4; }
.pg-tab { width: 115px; height: 52px; background: #fff; border-left: 1px solid #a8a6a4; border-right: 1px solid #a8a6a4; border-bottom: 6px solid #f2c811; text-align: center; font-size: 18px; line-height: 50px; color: #252423; }
.pg-add { width: 59px; height: 48px; margin-top: 2px; background: #f2c811; display: flex; align-items: center; justify-content: center; }
.pg-add span { width: 17px; height: 17px; background: linear-gradient(#797775,#797775) center/100% 5px no-repeat, linear-gradient(#797775,#797775) center/5px 100% no-repeat; }

/* viz pane */
.viz { width: 273px; flex: none; background: #f3f2f1; border-left: 1px solid #e1dfdd; border-right: 1px solid #d8d6d4; position: relative; overflow: hidden; }
.pane-head { height: 78px; padding: 25px 0 0 19px; display: flex; align-items: flex-start; justify-content: space-between; }
.pane-title { font-size: 24px; font-weight: 700; line-height: 24px; color: #3b3a39; }
.pane-chev { width: 10px; height: 18px; margin: 0 18px 0 0; position: relative; top: -3px; }
.viz-grid { display: grid; grid-template-columns: repeat(6, 25px); grid-auto-rows: 25px; column-gap: 17px; row-gap: 11px; padding-left: 9px; }
.viz-grid svg { width: 25px; height: 25px; overflow: visible; }
.s { fill: none; stroke: #3b3a39; stroke-width: 1.500; }
.wf { fill: #fff; stroke: #3b3a39; stroke-width: 1; }
.wf2 { fill: #fff; stroke: #3b3a39; stroke-width: 1.500; }
.wp { fill: #f3f2f1; stroke: #3b3a39; stroke-width: 1.300; }
.bf { fill: #74b3e8; stroke: #1c6fb5; stroke-width: 1.200; }
.bf0 { fill: #74b3e8; stroke: none; }
.gf { fill: #a6a6a6; stroke: #707070; stroke-width: 1; }
.l1 { stroke: #8a8886; stroke-width: 1; }
.l2 { fill: none; stroke: #2b88d8; stroke-width: 1.500; }
.l3 { stroke: #106ebe; stroke-width: 2; }
.l4 { stroke: #a19f9d; stroke-width: 1; }
.l5 { stroke: #8a8886; stroke-width: 1; }
.l6 { stroke: #8a8886; stroke-width: 1.200; }
.l7 { stroke: #106ebe; stroke-width: 1.500; }
.l8 { stroke: #8a8886; stroke-width: 1.200; }
.s1b { stroke: #1c6fb5; }
.gb2 { stroke: #a19f9d; stroke-width: 1.500; }
.rb-g { fill: #8a8886; stroke: #605e5c; }
.rb-o { fill: #f7a23b; }
.rb-b { fill: none; stroke: #1c6fb5; stroke-width: 3; }
.lb1 { fill: #74b3e8; }
.db1 { fill: #3b3a39; }
.globe { fill: #fff; stroke: #605e5c; }
.land { fill: #238a3b; }
.t123 { fill: #2b88d8; font: 400 12px "Liberation Sans", sans-serif; text-anchor: middle; }
.tg { fill: #4ea56c; }
.tr { fill: #e81123; }
.tr1 { fill: #2b88d8; font: 700 24px "Noto Sans", sans-serif; text-anchor: middle; }
.tpy { fill: #2b88d8; font: 700 23px "Noto Sans", sans-serif; }
.cb { fill: #74b3e8; stroke: #106ebe; }
.cg { fill: #a6a6a6; }
.cb2 { fill: #74b3e8; stroke: #106ebe; }
.kf { fill: #3b3a39; }
.bub { fill: #fff; stroke: #106ebe; stroke-width: 1.500; }
.mb { fill: #fff; stroke: #106ebe; stroke-width: 2; }
.pin { fill: #d9730d; }
.pn { fill: #fff; }
.dm { fill: none; stroke: #8a3ea8; stroke-width: 1.500; }
.ch { fill: #fff; stroke: #2b88d8; stroke-width: 1.500; }
.dd { fill: #3b3a39; }
.thumb-row { margin-top: 16px; border-top: 1px dashed #d8d6d4; border-bottom: 1px solid #d8d6d4; height: 43px; padding: 3px 0 0 5px; }
.thumb { width: 33px; height: 33px; }
.th-bg { fill: #cfcfcf; stroke: #605e5c; }
.th-p { stroke: #ef3f94; stroke-width: 2.500; opacity: .8; }
.th-b { stroke: #6a63ea; stroke-width: 2.500; opacity: .7; }
.th-g { stroke: #8fc5a8; stroke-width: 3; }
.viz-tabs { height: 57px; display: flex; padding: 13px 0 0 19px; gap: 0; }
.vt { appearance: none; border: 0; background: none; padding: 0; width: 60px; height: 42px; margin-right: 14px; display: flex; justify-content: center; position: relative; }
.vt svg { width: 30px; height: 30px; }
.vt:nth-child(2) { width: 28px; margin-right: 31px; }
.vt:nth-child(3) { width: 30px; }
.vt.on::after { content: ""; position: absolute; left: 0; right: 0; bottom: 0; height: 6px; border-radius: 3px; background: #f2c811; }
.dash { fill: none; stroke: #3b3a39; stroke-width: 1.500; stroke-dasharray: 2.500 2; }
.wells { padding: 7px 0 0 7px; width: 262px; }
.flabel { font-size: 17px; line-height: 24px; padding-left: 12px; margin: 18px 0 7px; color: #484644; }
.wells .flabel:first-child { margin-top: 0; }
.well { width: 255px; background: #fff; border: 1px dashed #c8c6c4; border-radius: 3px; padding: 5px 4px 13px 3px; }
.pill { height: 35px; background: #edebe9; border: 1px solid #c8c6c4; border-radius: 3px; padding: 0 5px 0 7px; }
.pill.thin { height: 34px; }
.pill.tall { height: 62px; padding-top: 3px; }
.pr { display: flex; align-items: center; height: 33px; font-size: 18px; line-height: 24px; color: #484644; }
.pill.tall .pr { height: 27px; }
.pill.tall .pr.sub { margin-top: 3px; }
.pr.sub span { padding-left: 12px; }
.pc1 { width: 18px; height: 10px; margin-left: auto; }
.px { width: 17px; height: 17px; margin-left: 6px; }
.pr.sub .px { margin-left: auto; }
.kx { fill: none; stroke: #252423; stroke-width: 1.500; }
.well.empty { height: 41px; padding: 0 0 0 15px; font-size: 18px; line-height: 44px; color: #605e5c; }
.drill { margin: 28px 0 0 15px; font-size: 24px; font-weight: 700; line-height: 20px; color: #484644; }
.scroll { position: absolute; right: 0; top: 435px; width: 5px; height: 300px; border-radius: 3px; background: #d2d0ce; }
.redbox { position: absolute; left: 2px; top: 436px; width: 266px; height: 339px; border: 5px solid #ff2015; border-radius: 4px; }

/* fields */
.fields { width: 270px; flex: none; background: #f3f2f1; }
.fhead { padding: 17px 12px 0 13px; height: 68px; display: flex; justify-content: space-between; align-items: flex-start; }
.dbl { width: 19px; height: 18px; margin-top: 4px; }
.search { margin-left: 6px; width: 258px; height: 40px; background: #fff; border: 1px solid #797775; border-radius: 3px; display: flex; align-items: center; gap: 10px; padding: 0 0 0 11px; font-size: 21px; line-height: 24px; color: #605e5c; }
.search span { padding-top: 1px; }
.search svg { width: 22px; height: 22px; }
.gs { fill: none; stroke: #605e5c; stroke-width: 1.400; }
.tree { margin-top: 14px; font-size: 18px; color: #3b3a39; }
.tr { height: 36px; display: flex; align-items: center; padding-left: 37px; line-height: 24px; }
.tr.root { padding-left: 12px; }
.t-chev { width: 16px; height: 9px; }
.t-ic { width: 20px; height: 19px; margin-left: 6px; position: relative; }
.t-ic svg { width: 20px; height: 19px; }
.t-tx { margin-left: 8px; }
.t-exp { width: 20px; height: 17px; }
.t-exp svg { width: 9px; height: 17px; }
.cb-y { width: 18px; height: 18px; border-radius: 2px; background: #f2c811; }
.yc { fill: none; stroke: #605e5c; stroke-width: 1.200; }
.t-slot { width: 40px; height: 22px; position: relative; display: flex; justify-content: center; align-items: center; }
.cal { width: 24px; height: 22px; }
.cald { stroke: #8a8886; stroke-width: 1.500; stroke-dasharray: 2 1.500; fill: none; }
.sig { width: 16px; height: 21px; }
.badge { position: absolute; width: 18px; height: 18px; border-radius: 50%; background: #f2c811; display: flex; align-items: center; justify-content: center; }
.badge svg { width: 10px; height: 8px; }
.bc { fill: none; stroke: #252423; stroke-width: 1.800; }
.b1 { left: 11px; top: 9px; }
.b2 { left: 21px; top: 11px; }

.status { height: 36px; flex: none; background: #f3f2f1; border-top: 1px solid #dcdad8; padding-left: 7px; font-size: 18px; line-height: 36px; color: #605e5c; box-shadow: inset 0 -2px 0 #fff, inset 0 -3px 0 #d0d0d0; }
```
